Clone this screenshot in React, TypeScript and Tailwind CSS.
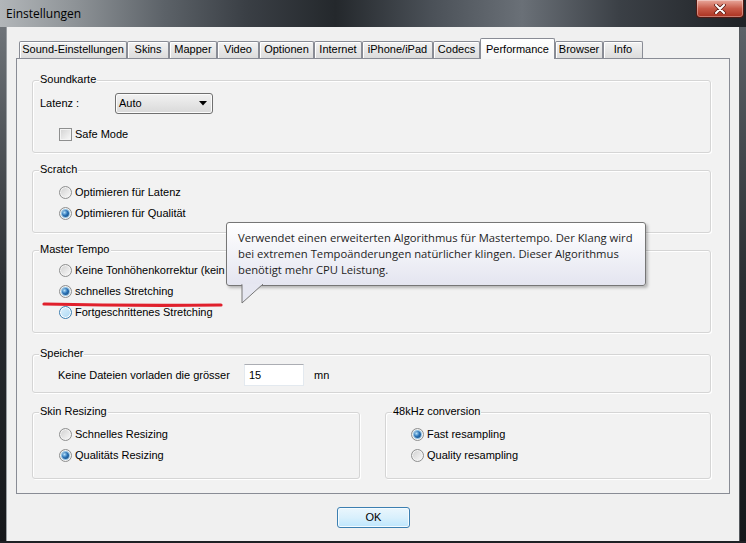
import React from 'react';

const tabs = [
  { label: 'Sound-Einstellungen', w: 'w-[108px]' },
  { label: 'Skins', w: 'w-[42px]' },
  { label: 'Mapper', w: 'w-[48px]' },
  { label: 'Video', w: 'w-[42px]' },
  { label: 'Optionen', w: 'w-[55px]' },
  { label: 'Internet', w: 'w-[48px]' },
  { label: 'iPhone/iPad', w: 'w-[71px]' },
  { label: 'Codecs', w: 'w-[47px]' },
  { label: 'Performance', w: 'w-[75px]', active: true },
  { label: 'Browser', w: 'w-[48px]' },
  { label: 'Info', w: 'w-[40px]' },
];

function Radio({ checked, hover }: { checked?: boolean; hover?: boolean }) {
  return (
    <span
      className={
        hover
          ? 'w-[13px] h-[13px] shrink-0 rounded-full border border-[#3c7fb1] bg-gradient-to-br from-[#dff1fc] to-[#a9d8f4] flex items-center justify-center shadow-[inset_0_0_0_1px_#ffffff]'
          : 'w-[13px] h-[13px] shrink-0 rounded-full border border-[#8e8f8f] bg-gradient-to-br from-[#cfcfcf] to-[#fbfbfb] flex items-center justify-center shadow-[inset_0_0_0_1px_#f4f4f4]'
      }
    >
      {checked && (
        <span className="w-[7px] h-[7px] rounded-full bg-[radial-gradient(circle_at_35%_35%,#b6e2fa,#2b74b8_45%,#0d3d6e)] shadow-[0_0_0_1px_#8fc3e6]" />
      )}
    </span>
  );
}

function RadioRow({ label, checked, hover }: { label: string; checked?: boolean; hover?: boolean }) {
  return (
    <div className="h-[21px] flex items-center gap-[3px] whitespace-nowrap">
      <Radio checked={checked} hover={hover} />
      <span>{label}</span>
    </div>
  );
}

function Group({ title, className, children }: { title: string; className: string; children: React.ReactNode }) {
  return (
    <div className={`relative rounded-[3px] border border-[#d5d5d5] shadow-[inset_1px_1px_0_#ffffff,1px_1px_0_#ffffff] ${className}`}>
      <span className="absolute -top-[9px] left-[6px] px-[1px] bg-[#f2f2f2] leading-[14px]">{title}</span>
      {children}
    </div>
  );
}

export default function App() {
  return (
    <div className="relative w-[746px] h-[543px] overflow-hidden bg-[#1e2125] text-black text-[11px] font-['Liberation_Sans',Arial,sans-serif]">
      {/* Title bar */}
      <div className="h-[27px] flex justify-between bg-[linear-gradient(90deg,#b2b6b9_0%,#8e9397_10%,#5c6268_22%,#3a3f45_33%,#24282c_45%,#4b5158_58%,#6a7077_70%,#3b4046_83%,#1f2226_100%)]">
        <span className="pl-[6px] pt-[6px] text-[12px] font-['Open_Sans',sans-serif] leading-[16px]">Einstellungen</span>
        <div className="mr-[2px] w-[48px] h-[18px] rounded-b-[4px] border border-t-0 border-[#4f1a14] bg-gradient-to-b from-[#e8a89c] via-[#c75a48] to-[#a9301f] flex items-center justify-center shadow-[inset_0_0_0_1px_rgba(255,255,255,0.35)]">
          <svg width="12" height="10" viewBox="0 0 12 10">
            <path d="M2 1 L10 9 M10 1 L2 9" stroke="#5a1a12" strokeWidth="3.6" strokeLinecap="round" />
            <path d="M2 1 L10 9 M10 1 L2 9" stroke="#ffffff" strokeWidth="2" strokeLinecap="round" />
          </svg>
        </div>
      </div>

      <div className="flex h-[514px]">
        <div className="w-[7px] bg-gradient-to-b from-[#6f7479] via-[#2c2f33] to-[#15171a] border-r border-[#9a9ea2]" />

        {/* Client area */}
        <div className="w-[732px] bg-[#f0f0f0] pt-[11px] pl-[9px] flex flex-col">
          {/* Tabs */}
          <div className="h-[20px] flex items-end pl-[3px]">
            {tabs.map((t) =>
              t.active ? (
                <div
                  key={t.label}
                  className={`${t.w} h-[21px] -mb-[1px] relative z-10 border border-b-0 border-[#898c95] rounded-t-[2px] bg-gradient-to-b from-[#ffffff] to-[#f5f5f5] flex items-start justify-center pt-[2px] whitespace-nowrap`}
                >
                  {t.label}
                </div>
              ) : (
                <div
                  key={t.label}
                  className={`${t.w} h-[17px] border border-b-0 border-[#898c95] rounded-t-[2px] bg-gradient-to-b from-[#f3f3f3] to-[#dcdcdc] shadow-[inset_1px_1px_0_#ffffff] flex items-center justify-center pb-[1px] whitespace-nowrap`}
                >
                  {t.label}
                </div>
              )
            )}
          </div>

          {/* Panel */}
          <div className="w-[714px] h-[436px] border border-[#898c95] bg-[#f2f2f2] pl-[15px] pr-[18px] pt-[21px] flex flex-col">
            <Group title="Soundkarte" className="h-[73px] pt-[12px] pl-[7px]">
              <div className="flex items-center">
                <span className="w-[75px]">Latenz :</span>
                <div className="w-[98px] h-[21px] rounded-[3px] border border-[#707070] bg-gradient-to-b from-[#f2f2f2] to-[#d9d9d9] shadow-[inset_0_0_0_1px_#fbfbfb] flex items-center justify-between pl-[3px] pr-[5px]">
                  <span>Auto</span>
                  <svg width="8" height="5" viewBox="0 0 8 5">
                    <path d="M0 0 H8 L4 4.5 Z" fill="#000" />
                  </svg>
                </div>
              </div>
              <div className="mt-[12px] pl-[19px] flex items-center gap-[3px]">
                <span className="w-[13px] h-[13px] border border-[#8e8f8f] bg-gradient-to-br from-[#d2d2d2] to-[#fafafa] shadow-[inset_0_0_0_1px_#f4f4f4]" />
                <span>Safe Mode</span>
              </div>
            </Group>

            <Group title="Scratch" className="mt-[17px] h-[63px] pt-[11px] pl-[26px]">
              <RadioRow label="Optimieren für Latenz" />
              <RadioRow label="Optimieren für Qualität" checked />
            </Group>

            <Group title="Master Tempo" className="mt-[17px] h-[83px] pt-[9px] pl-[26px]">
              <RadioRow label="Keine Tonhöhenkorrektur (kein Mastertempo)" />
              <RadioRow label="schnelles Stretching" checked />
              <RadioRow label="Fortgeschrittenes Stretching" hover />
            </Group>

            <Group title="Speicher" className="mt-[21px] h-[39px] pt-[9px] pl-[25px]">
              <div className="flex items-center">
                <span className="w-[186px]">Keine Dateien vorladen die grösser</span>
                <div className="w-[60px] h-[22px] bg-white border border-[#e3e9ef] border-t-[#abadb3] flex items-center pl-[4px]">15</div>
                <span className="ml-[10px]">mn</span>
              </div>
            </Group>

            <div className="mt-[19px] flex">
              <Group title="Skin Resizing" className="w-[328px] h-[67px] pt-[11px] pl-[26px]">
                <RadioRow label="Schnelles Resizing" />
                <RadioRow label="Qualitäts Resizing" checked />
              </Group>
              <Group title="48kHz conversion" className="ml-[25px] flex-1 h-[67px] pt-[11px] pl-[25px]">
                <RadioRow label="Fast resampling" checked />
                <RadioRow label="Quality resampling" />
              </Group>
            </div>
          </div>

          {/* OK button */}
          <div className="mt-[13px] pl-[321px]">
            <button className="w-[73px] h-[21px] rounded-[3px] border border-[#3c7fb1] bg-gradient-to-b from-[#eaf6fd] via-[#d9f0fc] to-[#bee6fd] shadow-[inset_0_0_0_1px_#f4fbff] flex items-center justify-center">
              OK
            </button>
          </div>
        </div>

        <div className="w-[7px] bg-gradient-to-b from-[#5d6268] via-[#2a2d31] to-[#15171a] border-l border-[#55595e]" />
      </div>

      {/* Tooltip */}
      <div className="absolute left-[226px] top-[222px] w-[420px] h-[64px] rounded-[3px] border border-[#767676] bg-gradient-to-b from-[#ffffff] to-[#e4e5f0] shadow-[2px_2px_3px_rgba(0,0,0,0.25)] pl-[11px] pt-[7px] text-[11.25px] leading-[16px] text-[#1e1e1e] font-['Open_Sans',sans-serif] whitespace-nowrap">
        Verwendet einen erweiterten Algorithmus für Mastertempo. Der Klang wird
        <br />
        bei extremen Tempoänderungen natürlicher klingen. Dieser Algorithmus
        <br />
        benötigt mehr CPU Leistung.
      </div>
      <svg className="absolute left-[241px] top-[284px]" width="24" height="21" viewBox="0 0 24 21">
        <path d="M1 0 V19 L22 0" fill="#e6e7f1" stroke="#767676" strokeWidth="1" />
        <path d="M1.6 0 H21" stroke="#e6e7f1" strokeWidth="2" />
      </svg>

      {/* Red annotation */}
      <svg className="absolute left-[42px] top-[301px]" width="182" height="8" viewBox="0 0 182 8">
        <path d="M2 3 Q90 5 179 4" stroke="#e0202c" strokeWidth="3.2" fill="none" strokeLinecap="round" />
      </svg>
    </div>
  );
}
